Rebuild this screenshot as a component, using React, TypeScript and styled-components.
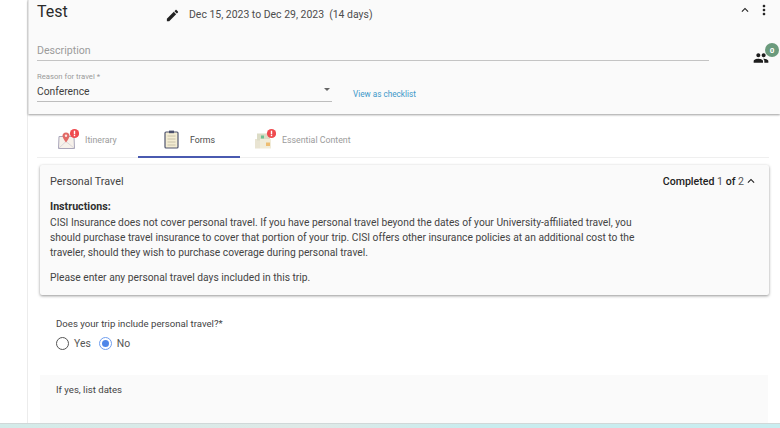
import React from "react";
import styled, { createGlobalStyle } from "styled-components";

const Global = createGlobalStyle`
  html, body { margin: 0; padding: 0; background: #fff; }
  body { font-family: Roboto, "Liberation Sans", sans-serif; color: #3c3c3c; }
  * { box-sizing: border-box; }
`;

const Page = styled.div`
  width: 780px; height: 428px; overflow: hidden;
  display: flex; flex-direction: column; background: #fff;
`;
const Main = styled.div`
  flex: 1; min-height: 0; display: flex;
`;
const Gutter = styled.div`
  width: 28px; flex: none; background: #fff; border-right: 1px solid #ececec;
`;
const Content = styled.div`
  flex: 1; min-width: 0; display: flex; flex-direction: column;
`;
const BottomStrip = styled.div`
  height: 5px; flex: none;
  background: linear-gradient(90deg, #d3ebe9 0%, #dfe9e7 40%, #c9ecee 60%, #c9edf0 100%);
  border-top: 1px solid #d0d8d8;
`;

const Header = styled.header`
  height: 114px; flex: none; background: #fafafa;
  border-left: 1px solid #e4e4e4;
  box-shadow: 0 1px 2px rgba(0,0,0,.38);
  padding-left: 8px; display: flex; flex-direction: column;
`;
const TitleRow = styled.div`
  display: flex; align-items: center; height: 24px;
`;
const Title = styled.h1`
  margin: 0; width: 128px; font-size: 16px; font-weight: 400; color: #2a2a2a; line-height: 24px;
`;
const Pencil = styled.span`
  display: block; margin-top: 6px; color: #222;
`;
const DateText = styled.span`
  margin-left: 9px; font-size: 10.45px; color: #4d4d4d; white-space: pre; position: relative; top: 2px;
`;
const Actions = styled.div`
  margin-left: auto; margin-right: 8px; display: flex; align-items: center; gap: 4px; color: #222;
  position: relative; top: -2px;
`;
const DescRow = styled.div`
  display: flex; align-items: flex-end; margin-top: 17px; height: 20px;
`;
const Description = styled.div`
  width: 672px; height: 20px; border-bottom: 1px solid #c4c4c4;
  font-size: 10.6px; color: #9a9a9a; line-height: 19px;
`;
const People = styled.div`
  position: relative; margin-left: 44px; width: 20px; height: 16px; top: 5px; color: #1d1d1d;
`;
const Badge = styled.span`
  position: absolute; left: 12px; top: -7px; width: 14px; height: 14px; border-radius: 50%;
  background: #6a9a7c; color: #fff; font-size: 8px; font-weight: 700;
  display: flex; align-items: center; justify-content: center;
`;
const ReasonRow = styled.div`
  display: flex; align-items: flex-end; margin-top: 11px;
`;
const ReasonField = styled.div`
  width: 295px; border-bottom: 1px solid #bdbdbd; position: relative; height: 30px;
`;
const ReasonLabel = styled.div`
  font-size: 7.7px; color: #9a9a9a; line-height: 10px;
`;
const ReasonValue = styled.div`
  font-size: 10.3px; color: #3f3f3f; line-height: 13px; margin-top: 3px;
`;
const Caret = styled.span`
  position: absolute; right: 2px; top: 16px; width: 0; height: 0;
  border-left: 3.5px solid transparent; border-right: 3.5px solid transparent; border-top: 3.5px solid #666;
`;
const Link = styled.a`
  margin-left: 21px; font-size: 8.2px; color: #3d98c9; line-height: 12px; margin-bottom: 2px;
`;

const Tabs = styled.nav`
  height: 44px; flex: none; margin-left: 9px; border-bottom: 1px solid #efefef;
  display: flex; align-items: stretch; margin-right: 11px;
`;
const Tab = styled.div<{ $active?: boolean; $w: number; $pad: number }>`
  width: ${p => p.$w}px; padding-left: ${p => p.$pad}px; display: flex; align-items: center; gap: 6px;
  font-size: 8.8px; color: ${p => p.$active ? "#4a4a4a" : "#9b9b9b"};
  border-bottom: ${p => p.$active ? "2px solid #4a5ab0" : "2px solid transparent"};
  margin-bottom: -1px; padding-top: 10px;
`;
const TabIcon = styled.span`
  width: 22px; height: 24px; flex: none; display: block; position: relative;
`;

const Panel = styled.section`
  margin: 7px 11px 0 12px; height: 130px; flex: none; background: #fafafa;
  box-shadow: 0 1px 3px rgba(0,0,0,.42); padding: 9px 10px 0 10px;
  border-radius: 2px;
`;
const PanelHead = styled.div`
  display: flex; align-items: center; justify-content: space-between; height: 14px;
  font-size: 10.8px; color: #444;
`;
const Completed = styled.div`
  display: flex; align-items: center; font-size: 10.6px; font-weight: 500; color: #222;
  margin-right: 1px;
  b { font-weight: 400; color: #555; white-space: pre; }
`;
const Instr = styled.div`
  margin-top: 11px; font-size: 10.7px; font-weight: 700; color: #2f2f2f; line-height: 16px;
`;
const Body = styled.p`
  margin: 0; width: 600px; font-size: 10.25px; line-height: 15px; color: #444;
`;
const Tail = styled.p`
  margin: 10px 0 0; font-size: 10.25px; line-height: 15px; color: #444;
`;

const Question = styled.div`
  margin: 22px 0 0 28px; font-size: 9.65px; color: #444; line-height: 14px;
`;
const Radios = styled.div`
  margin: 5px 0 0 28px; display: flex; align-items: center; height: 14px;
  font-size: 10.4px; color: #555;
`;
const Radio = styled.span<{ $on?: boolean }>`
  width: 13px; height: 13px; border-radius: 50%; flex: none; display: flex; align-items: center; justify-content: center;
  border: 1px solid ${p => p.$on ? "#6f9ef0" : "#555"};
  margin-right: 5px;
  &::after { content: ""; width: 7px; height: 7px; border-radius: 50%; background: ${p => p.$on ? "#4f86e8" : "transparent"}; }
`;
const RadioLabel = styled.span`
  margin-right: 8px;
`;
const DatesBlock = styled.div`
  flex: 1; margin: 25px 12px 0 12px; background: #fafafa; padding: 8px 16px 0;
  font-size: 9.6px; color: #444; line-height: 14px;
`;

const Mui = ({ d, size = 24 }: { d: string; size?: number }) => (
  <svg width={size} height={size} viewBox="0 0 24 24" fill="currentColor" style={{ display: "block", flex: "none" }}><path d={d} /></svg>
);

const Alert = () => (
  <g>
    <circle cx="17.5" cy="5.5" r="4.6" fill="#ef4b4f" />
    <rect x="16.8" y="2.7" width="1.4" height="3.6" fill="#fff" />
    <rect x="16.8" y="6.9" width="1.4" height="1.3" fill="#fff" />
  </g>
);

const ItineraryIcon = () => (
  <svg width="22" height="24" viewBox="0 0 22 24">
    <path d="M2 8.5 L17 8.5 L17.5 20.5 L1.5 20.5 Z" fill="#f6f1ea" stroke="#a9a6ba" strokeWidth="1" />
    <path d="M2 20 L9 13.5 L17 20" fill="none" stroke="#d4cfd4" strokeWidth=".8" />
    <path d="M9 4.5 C6.8 4.5 5.5 6.1 5.5 7.8 C5.5 10.1 9 14.5 9 14.5 C9 14.5 12.5 10.1 12.5 7.8 C12.5 6.1 11.2 4.5 9 4.5 Z" fill="#e26a66" />
    <circle cx="9" cy="7.8" r="1.2" fill="#fbe4e1" />
    <Alert />
  </svg>
);

const FormsIcon = () => (
  <svg width="22" height="24" viewBox="0 0 22 24">
    <rect x="3" y="4" width="13" height="16" rx="1" fill="#f3ecd2" stroke="#50556e" strokeWidth="1.2" />
    <rect x="7" y="2.6" width="5" height="2.6" fill="#4a4f6b" />
    <g stroke="#bdb89f" strokeWidth=".8">
      <line x1="5.5" y1="8" x2="13.5" y2="8" />
      <line x1="5.5" y1="11" x2="13.5" y2="11" />
      <line x1="5.5" y1="14" x2="13.5" y2="14" />
      <line x1="5.5" y1="17" x2="13.5" y2="17" />
    </g>
  </svg>
);

const EssentialIcon = () => (
  <svg width="22" height="24" viewBox="0 0 22 24">
    <rect x="1" y="11" width="5" height="9.5" fill="#e9e4d2" />
    <rect x="3" y="5.5" width="13" height="7" fill="#dcdcc6" />
    <rect x="6" y="11" width="11" height="9.5" fill="#f1ecd9" />
    <rect x="7" y="7.5" width="3" height="3" fill="#6fbf92" />
    <rect x="12" y="14.5" width="4" height="3.5" fill="#eebd72" />
    <Alert />
  </svg>
);

const EDIT = "M3 17.25V21h3.75L17.81 9.94l-3.75-3.75L3 17.25zM20.71 7.04c.39-.39.39-1.02 0-1.41l-2.34-2.34c-.39-.39-1.02-.39-1.41 0l-1.83 1.83 3.75 3.75 1.83-1.83z";
const UP = "M7.41 15.41 12 10.83l4.59 4.58L18 14l-6-6-6 6z";
const MORE = "M12 8c1.1 0 2-.9 2-2s-.9-2-2-2-2 .9-2 2 .9 2 2 2zm0 2c-1.1 0-2 .9-2 2s.9 2 2 2 2-.9 2-2-.9-2-2-2zm0 6c-1.1 0-2 .9-2 2s.9 2 2 2 2-.9 2-2-.9-2-2-2z";
const GROUP = "M16 11c1.66 0 2.99-1.34 2.99-3S17.66 5 16 5c-1.66 0-3 1.34-3 3s1.34 3 3 3zm-8 0c1.66 0 2.99-1.34 2.99-3S9.66 5 8 5C6.34 5 5 6.34 5 8s1.34 3 3 3zm0 2c-2.33 0-7 1.17-7 3.5V19h14v-2.5c0-2.33-4.67-3.5-7-3.5zm8 0c-.29 0-.62.02-.97.05 1.16.84 1.97 1.97 1.97 3.45V19h6v-2.5c0-2.33-4.67-3.5-7-3.5z";

export default function App() {
  return (
    <Page>
      <Global />
      <Main>
        <Gutter />
        <Content>
          <Header>
            <TitleRow>
              <Title>Test</Title>
              <Pencil><Mui d={EDIT} size={15} /></Pencil>
              <DateText>{"Dec 15, 2023 to Dec 29, 2023  (14 days)"}</DateText>
              <Actions>
                <Mui d={UP} size={14} />
                <Mui d={MORE} size={16} />
              </Actions>
            </TitleRow>
            <DescRow>
              <Description>Description</Description>
              <People>
                <Mui d={GROUP} size={16} />
                <Badge>0</Badge>
              </People>
            </DescRow>
            <ReasonRow>
              <ReasonField>
                <ReasonLabel>Reason for travel *</ReasonLabel>
                <ReasonValue>Conference</ReasonValue>
                <Caret />
              </ReasonField>
              <Link>View as checklist</Link>
            </ReasonRow>
          </Header>
          <Tabs>
            <Tab $w={101} $pad={20}>
              <TabIcon><ItineraryIcon /></TabIcon>Itinerary
            </Tab>
            <Tab $w={102} $pad={24} $active>
              <TabIcon><FormsIcon /></TabIcon>Forms
            </Tab>
            <Tab $w={140} $pad={14}>
              <TabIcon><EssentialIcon /></TabIcon>Essential Content
            </Tab>
          </Tabs>
          <Panel>
            <PanelHead>
              <span>Personal Travel</span>
              <Completed>Completed&nbsp;<b>1</b>&nbsp;of&nbsp;<b>2</b><Mui d={UP} size={14} /></Completed>
            </PanelHead>
            <Instr>Instructions:</Instr>
            <Body>
              CISI Insurance does not cover personal travel. If you have personal travel beyond the dates of your University-affiliated travel, you should purchase travel insurance to cover that portion of your trip. CISI offers other insurance policies at an additional cost to the traveler, should they wish to purchase coverage during personal travel.
            </Body>
            <Tail>Please enter any personal travel days included in this trip.</Tail>
          </Panel>
          <Question>Does your trip include personal travel?*</Question>
          <Radios>
            <Radio /><RadioLabel>Yes</RadioLabel>
            <Radio $on /><RadioLabel>No</RadioLabel>
          </Radios>
          <DatesBlock>If yes, list dates</DatesBlock>
        </Content>
      </Main>
      <BottomStrip />
    </Page>
  );
}
